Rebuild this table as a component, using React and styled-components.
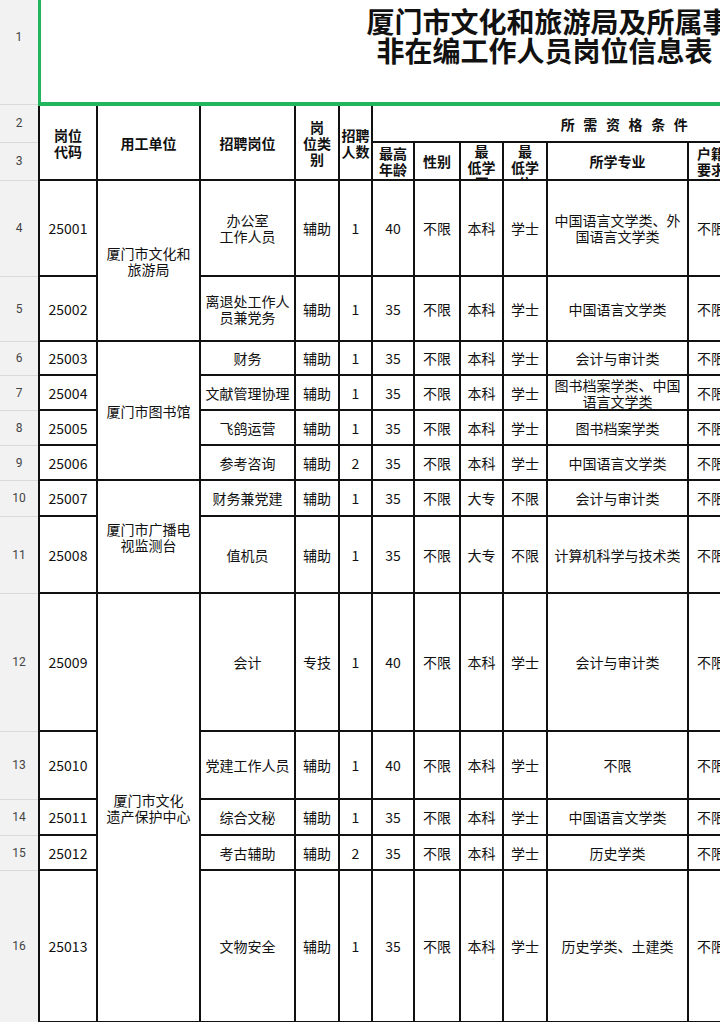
import React from 'react'
import styled, { createGlobalStyle } from 'styled-components'

const GlobalStyle = createGlobalStyle`
    html, body {
        margin: 0;
        padding: 0;
        background: #ffffff;
        overflow: hidden;
    }
    body {
        font-family: "Noto Sans CJK SC", "Noto Sans", sans-serif;
        color: #111111;
    }
`;

const GREEN = '#22b55f';

// column widths, row header first, last one sits off screen
const columns = [39, 58, 103, 95, 44, 33, 42, 46, 43, 44, 141, 46, 149];

const lines = (parts) => parts.map((p, i) => (
    <React.Fragment key={i}>
        {i > 0 && <br />}
        {p}
    </React.Fragment>
));

const rows = [
    { n: 4, h: 96, code: '25001', unit: { text: lines(['厦门市文化和旅游局']), span: 2 }, post: lines(['办公室', '工作人员']), type: '辅助', num: 1, age: 40, edu: '本科', deg: '学士', major: '中国语言文学类、外国语言文学类' },
    { n: 5, h: 65, code: '25002', post: '离退处工作人员兼党务', type: '辅助', num: 1, age: 35, edu: '本科', deg: '学士', major: '中国语言文学类' },
    { n: 6, h: 34, code: '25003', unit: { text: '厦门市图书馆', span: 4 }, post: '财务', type: '辅助', num: 1, age: 35, edu: '本科', deg: '学士', major: '会计与审计类' },
    { n: 7, h: 35, code: '25004', post: '文献管理协理', type: '辅助', num: 1, age: 35, edu: '本科', deg: '学士', major: '图书档案学类、中国语言文学类' },
    { n: 8, h: 35, code: '25005', post: '飞鸽运营', type: '辅助', num: 1, age: 35, edu: '本科', deg: '学士', major: '图书档案学类' },
    { n: 9, h: 35, code: '25006', post: '参考咨询', type: '辅助', num: 2, age: 35, edu: '本科', deg: '学士', major: '中国语言文学类' },
    { n: 10, h: 36, code: '25007', unit: { text: '厦门市广播电视监测台', span: 2 }, post: '财务兼党建', type: '辅助', num: 1, age: 35, edu: '大专', deg: '不限', major: '会计与审计类' },
    { n: 11, h: 77, code: '25008', post: '值机员', type: '辅助', num: 1, age: 35, edu: '大专', deg: '不限', major: '计算机科学与技术类' },
    { n: 12, h: 138, code: '25009', unit: { text: lines(['厦门市文化', '遗产保护中心']), span: 5 }, post: '会计', type: '专技', num: 1, age: 40, edu: '本科', deg: '学士', major: '会计与审计类' },
    { n: 13, h: 68, code: '25010', post: '党建工作人员', type: '辅助', num: 1, age: 40, edu: '本科', deg: '学士', major: '不限' },
    { n: 14, h: 36, code: '25011', post: '综合文秘', type: '辅助', num: 1, age: 35, edu: '本科', deg: '学士', major: '中国语言文学类' },
    { n: 15, h: 35, code: '25012', post: '考古辅助', type: '辅助', num: 2, age: 35, edu: '本科', deg: '学士', major: '历史学类' },
    { n: 16, h: 152, code: '25013', post: '文物安全', type: '辅助', num: 1, age: 35, edu: '本科', deg: '学士', major: '历史学类、土建类' },
];

function App() {
    return (
        <>
            <GlobalStyle />
            <Viewport>
                <Sheet>
                    <colgroup>
                        {columns.map((w, i) => <col key={i} style={{ width: w }} />)}
                    </colgroup>
                    <tbody>
                        <Row $h={134}>
                            <RowHead>1</RowHead>
                            <TitleCell colSpan={12}>
                                <TitleLine>厦门市文化和旅游局及所属事业单位公开招聘</TitleLine>
                                <TitleLine $indent={10}>非在编工作人员岗位信息表</TitleLine>
                            </TitleCell>
                        </Row>
                        <Row $h={38}>
                            <RowHead>2</RowHead>
                            <Cell $bold rowSpan={2}>岗位<br />代码</Cell>
                            <Cell $bold rowSpan={2}>用工单位</Cell>
                            <Cell $bold rowSpan={2}>招聘岗位</Cell>
                            <Cell $bold rowSpan={2}>岗<br />位类别</Cell>
                            <Cell $bold $tight rowSpan={2}>招聘人数</Cell>
                            <Cell $bold colSpan={7}><Spaced>所需资格条件</Spaced></Cell>
                        </Row>
                        <Row $h={38}>
                            <RowHead>3</RowHead>
                            <Cell $bold>最高<br />年龄</Cell>
                            <Cell $bold>性别</Cell>
                            <Cell $bold><Clip>最<br />低学历</Clip></Cell>
                            <Cell $bold><Clip>最<br />低学位</Clip></Cell>
                            <Cell $bold>所学专业</Cell>
                            <Cell $bold>户籍要求</Cell>
                            <Cell $bold>其他条件</Cell>
                        </Row>
                        {rows.map((r) => (
                            <Row key={r.n} $h={r.h}>
                                <RowHead>{r.n}</RowHead>
                                <Cell>{r.code}</Cell>
                                {r.unit && <Cell rowSpan={r.unit.span}>{r.unit.text}</Cell>}
                                <Cell>{r.post}</Cell>
                                <Cell>{r.type}</Cell>
                                <Cell>{r.num}</Cell>
                                <Cell>{r.age}</Cell>
                                <Cell>不限</Cell>
                                <Cell>{r.edu}</Cell>
                                <Cell>{r.deg}</Cell>
                                <Cell>{r.major}</Cell>
                                <Cell>不限</Cell>
                                <Cell></Cell>
                            </Row>
                        ))}
                    </tbody>
                </Sheet>
            </Viewport>
        </>
    )
}

const Viewport = styled.div`
    width: 720px;
    height: 1022px;
    overflow: hidden;
`;

const Sheet = styled.table`
    margin-top: -30px;
    border-collapse: collapse;
    table-layout: fixed;
    width: ${columns.reduce((a, b) => a + b, 0)}px;
`;

const Row = styled.tr`
    height: ${p => p.$h}px;
`;

const RowHead = styled.th`
    background: #f2f2f2;
    color: #444444;
    font-family: Roboto, "Noto Sans", sans-serif;
    font-size: 12px;
    font-weight: 400;
    padding: 0;
    text-align: center;
    vertical-align: middle;
    border-right: 1px solid #cfcfcf;
    border-bottom: 1px solid #dadada;
`;

const TitleCell = styled.td`
    border-left: 3px solid ${GREEN};
    border-right: 3px solid ${GREEN};
    border-bottom: 4px solid ${GREEN};
    padding: 0 0 0 326px;
    vertical-align: middle;
    text-align: left;
    white-space: nowrap;
    overflow: hidden;
`;

const TitleLine = styled.div`
    font-size: 28px;
    font-weight: 700;
    line-height: 29px;
    color: #111111;
    padding-left: ${p => p.$indent || 0}px;
`;

const Cell = styled.td`
    border: 2px solid #111111;
    padding: ${p => (p.$tight ? '0' : '0 3px')};
    text-align: center;
    vertical-align: middle;
    font-size: 14px;
    line-height: 16px;
    font-weight: ${p => (p.$bold ? 700 : 400)};
    word-break: break-all;
    overflow: hidden;
`;

const Clip = styled.div`
    height: 36px;
    overflow: hidden;
`;

const Spaced = styled.span`
    letter-spacing: 8.6px;
    padding-left: 2px;
`;

export default App
